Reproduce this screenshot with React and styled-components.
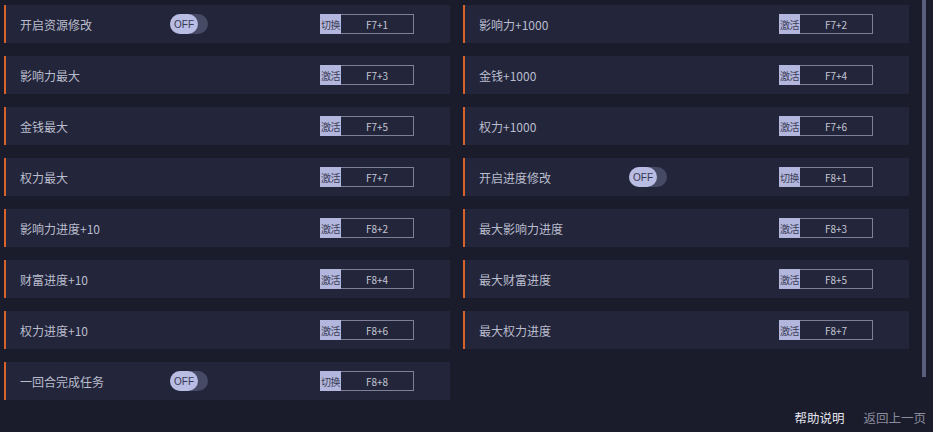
import React from 'react';
import styled, { createGlobalStyle } from 'styled-components';

const GlobalStyle = createGlobalStyle`
  html, body {
    margin: 0;
    padding: 0;
    background: #1a1c2b;
    font-family: "Noto Sans CJK SC", "Noto Sans", sans-serif;
  }
`;

const leftItems = [
    { label: '开启资源修改', toggle: true, action: '切换', key: 'F7+1' },
    { label: '影响力最大', action: '激活', key: 'F7+3' },
    { label: '金钱最大', action: '激活', key: 'F7+5' },
    { label: '权力最大', action: '激活', key: 'F7+7' },
    { label: '影响力进度+10', action: '激活', key: 'F8+2' },
    { label: '财富进度+10', action: '激活', key: 'F8+4' },
    { label: '权力进度+10', action: '激活', key: 'F8+6' },
    { label: '一回合完成任务', toggle: true, action: '切换', key: 'F8+8' }
];

const rightItems = [
    { label: '影响力+1000', action: '激活', key: 'F7+2' },
    { label: '金钱+1000', action: '激活', key: 'F7+4' },
    { label: '权力+1000', action: '激活', key: 'F7+6' },
    { label: '开启进度修改', toggle: true, action: '切换', key: 'F8+1' },
    { label: '最大影响力进度', action: '激活', key: 'F8+3' },
    { label: '最大财富进度', action: '激活', key: 'F8+5' },
    { label: '最大权力进度', action: '激活', key: 'F8+7' }
];

function OptionRow({ item }) {
    return (
        <Card>
            <Label>{item.label}</Label>
            {item.toggle && (
                <Toggle>
                    <Knob>OFF</Knob>
                </Toggle>
            )}
            <HotKey>
                <ActionTag>{item.action}</ActionTag>
                <KeyValue>{item.key}</KeyValue>
            </HotKey>
        </Card>
    );
}

function App() {
    return (
        <>
            <GlobalStyle />
            <Page>
                <Body>
                    <Columns>
                        <Column>
                            {leftItems.map(item => <OptionRow key={item.key} item={item} />)}
                        </Column>
                        <Column>
                            {rightItems.map(item => <OptionRow key={item.key} item={item} />)}
                        </Column>
                    </Columns>
                    <ScrollThumb />
                </Body>
                <Footer>
                    <FooterLink primary>帮助说明</FooterLink>
                    <FooterLink>返回上一页</FooterLink>
                </Footer>
            </Page>
        </>
    );
}

const Page = styled.div`
  width: 933px;
  height: 432px;
  display: flex;
  flex-direction: column;
  overflow: hidden;
`;

const Body = styled.div`
  display: flex;
  align-items: flex-start;
`;

const Columns = styled.div`
  display: grid;
  grid-template-columns: 446px 446px;
  column-gap: 13px;
  padding: 5px 0 0 4px;
`;

const Column = styled.div`
  display: flex;
  flex-direction: column;
  gap: 13px;
`;

const Card = styled.div`
  height: 38px;
  display: flex;
  align-items: center;
  box-sizing: border-box;
  background: #23253a;
  border-left: 2px solid #d8622c;
  padding-left: 14px;
  padding-right: 36px;
`;

const Label = styled.span`
  width: 150px;
  flex-shrink: 0;
  font-size: 12px;
  color: #babdcd;
  white-space: nowrap;
`;

const Toggle = styled.div`
  width: 38px;
  height: 20px;
  border-radius: 10px;
  background: #474a65;
  display: flex;
  align-items: center;
`;

const Knob = styled.div`
  width: 28px;
  height: 20px;
  border-radius: 10px;
  background: #b9bce3;
  color: #363852;
  font-family: "Liberation Sans", Arial, sans-serif;
  font-size: 10px;
  display: flex;
  align-items: center;
  justify-content: center;
`;

const HotKey = styled.div`
  margin-left: auto;
  display: flex;
  height: 20px;
`;

const ActionTag = styled.span`
  width: 21px;
  background: #b4b7dd;
  color: #3a3c56;
  font-size: 10px;
  display: flex;
  align-items: center;
  justify-content: center;
  white-space: nowrap;
  overflow: hidden;
  letter-spacing: -0.5px;
`;

const KeyValue = styled.span`
  width: 73px;
  box-sizing: border-box;
  border: 1px solid #7d8098;
  border-left: none;
  color: #c4c5d3;
  font-size: 10px;
  display: flex;
  align-items: center;
  justify-content: center;
`;

const ScrollThumb = styled.div`
  width: 4px;
  height: 377px;
  margin-left: 13px;
  background: #5a5e7c;
`;

const Footer = styled.div`
  display: flex;
  justify-content: flex-end;
  gap: 19px;
  padding: 8px 7px 0 0;
`;

const FooterLink = styled.span`
  font-size: 12.5px;
  color: ${props => props.primary ? '#e4e5ee' : '#8b8d9e'};
  cursor: pointer;
`;

export default App;
